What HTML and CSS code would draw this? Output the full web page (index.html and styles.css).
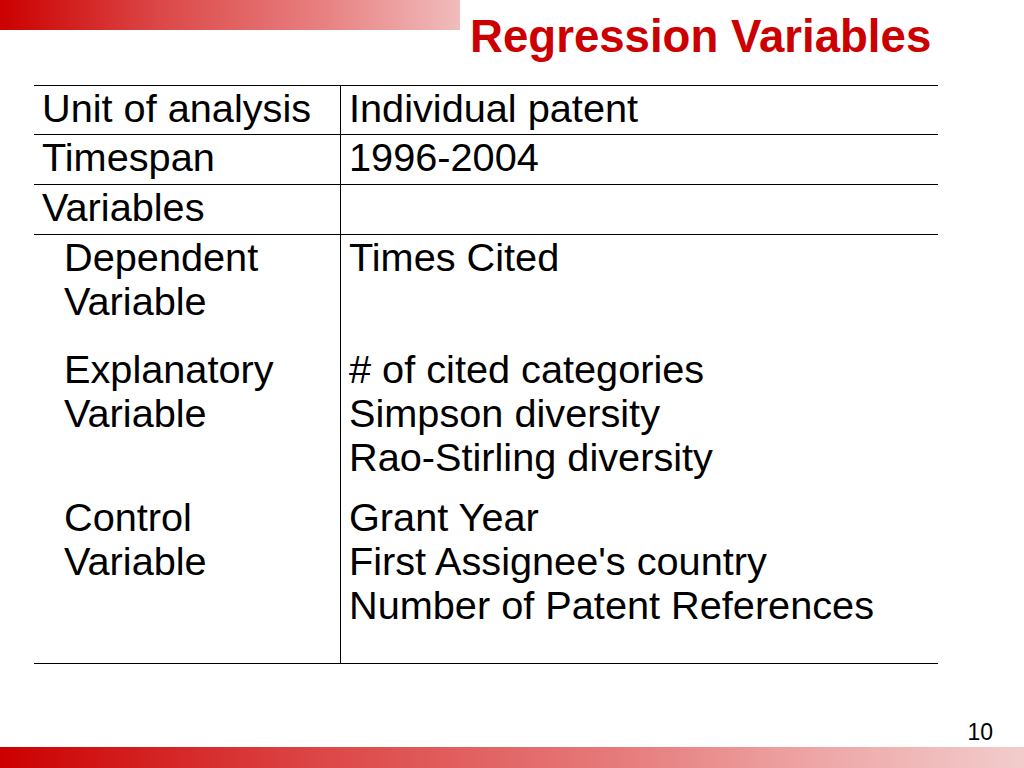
FILE: index.html
```html
<!DOCTYPE html>
<html>
<head>
<meta charset="utf-8">
<title>Regression Variables</title>
<link rel="stylesheet" href="styles.css">
</head>
<body>
<div class="slide">
  <header class="head">
    <div class="topbar"></div>
    <h1 class="title">Regression Variables</h1>
  </header>
  <div class="table">
    <div class="row r1">
      <div class="c1">Unit of analysis</div>
      <div class="c2">Individual patent</div>
    </div>
    <div class="row r2">
      <div class="c1">Timespan</div>
      <div class="c2">1996-2004</div>
    </div>
    <div class="row r3">
      <div class="c1">Variables</div>
      <div class="c2"></div>
    </div>
    <div class="row r4">
      <div class="c1">
        <div class="sub dep">Dependent<br>Variable</div>
        <div class="sub exp">Explanatory<br>Variable</div>
        <div class="sub ctl">Control<br>Variable</div>
      </div>
      <div class="c2">
        <div class="sub dep">Times Cited<br>&nbsp;</div>
        <div class="sub exp"># of cited categories<br>Simpson diversity<br>Rao-Stirling diversity</div>
        <div class="sub ctl">Grant Year<br>First Assignee's country<br>Number of Patent References</div>
      </div>
    </div>
  </div>
  <footer class="foot">
    <div class="pagenum">10</div>
    <div class="bottombar"></div>
  </footer>
</div>
</body>
</html>
```

FILE: styles.css
```css
html, body {
  margin: 0;
  padding: 0;
  background: #ffffff;
}

.slide {
  width: 1024px;
  height: 768px;
  display: flex;
  flex-direction: column;
  font-family: "Liberation Sans", Arial, sans-serif;
  color: #000;
  overflow: hidden;
}

.head {
  height: 85px;
  display: flex;
  align-items: flex-start;
}

.topbar {
  width: 460px;
  height: 30px;
  flex: none;
  background: linear-gradient(to right, #cc0000 0%, #dc4848 35%, #e88080 70%, #f0bcbc 100%);
}

.title {
  margin: 0 0 0 10px;
  padding-top: 7px;
  font-size: 45.6px;
  line-height: 60px;
  font-weight: bold;
  color: #cc0000;
  white-space: nowrap;
}

.table {
  margin-left: 34px;
  width: 904px;
  border-top: 1px solid #000;
  font-size: 39.7px;
  line-height: 44px;
}

.row {
  display: flex;
  border-bottom: 1px solid #000;
}

.c1 {
  width: 307px;
  flex: none;
  border-right: 1px solid #000;
  padding-left: 8px;
  box-sizing: border-box;
}

.c2 {
  flex: 1;
  padding-left: 8px;
  white-space: nowrap;
}

.r1 .c1, .r1 .c2 { padding-bottom: 4px; }
.r2 .c1, .r2 .c2 { padding-bottom: 5px; }
.r3 .c1, .r3 .c2 { padding-bottom: 5px; }

.r4 .c1 { padding-left: 30px; }

.sub.dep { padding-bottom: 24px; }
.sub.exp { padding-bottom: 16px; }
.sub.ctl { padding-bottom: 36px; }

.r4 .c1 .sub.exp { padding-bottom: 60px; }

.foot {
  margin-top: auto;
  display: flex;
  flex-direction: column;
}

.pagenum {
  align-self: flex-end;
  margin-right: 31px;
  font-size: 23px;
  line-height: 26px;
  margin-bottom: 2px;
}

.bottombar {
  height: 21px;
  background: linear-gradient(to right, #cc0000 0%, #dc4444 30%, #e67a7a 60%, #eea6a6 80%, #f2cccc 100%);
}
```
